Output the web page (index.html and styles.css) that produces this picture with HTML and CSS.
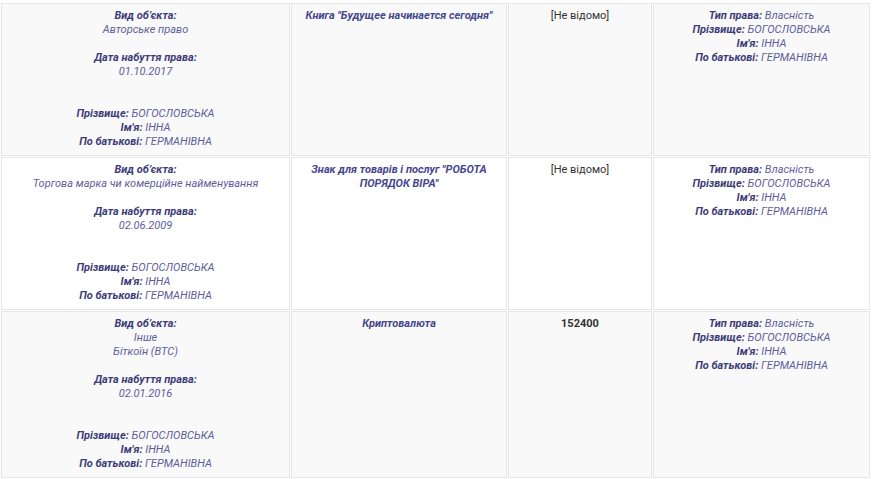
FILE: index.html
```html
<!DOCTYPE html>
<html lang="uk">
<head>
    <meta charset="UTF-8">
    <meta name="viewport" content="width=device-width, initial-scale=1.0">
    <title>Об'єкти інтелектуальної власності</title>
    <link rel="stylesheet" href="styles.css">
</head>
<body>
    <table class="rights-table">
        <colgroup>
            <col class="col-object">
            <col class="col-name">
            <col class="col-cost">
            <col class="col-owner">
        </colgroup>
        <tbody>
            <!-- Авторське право -->
            <tr>
                <td>
                    <div class="field">
                        <span class="label">Вид об’єкта:</span>
                        <div class="value">Авторське право</div>
                    </div>
                    <div class="field">
                        <span class="label">Дата набуття права:</span>
                        <div class="value">01.10.2017</div>
                    </div>
                    <div class="person">
                        <div><span class="label">Прізвище:</span> <span class="value">БОГОСЛОВСЬКА</span></div>
                        <div><span class="label">Ім'я:</span> <span class="value">ІННА</span></div>
                        <div><span class="label">По батькові:</span> <span class="value">ГЕРМАНІВНА</span></div>
                    </div>
                </td>
                <td class="title">Книга "Будущее начинается сегодня"</td>
                <td class="cost">[Не відомо]</td>
                <td>
                    <div><span class="label">Тип права:</span> <span class="value">Власність</span></div>
                    <div><span class="label">Прізвище:</span> <span class="value">БОГОСЛОВСЬКА</span></div>
                    <div><span class="label">Ім'я:</span> <span class="value">ІННА</span></div>
                    <div><span class="label">По батькові:</span> <span class="value">ГЕРМАНІВНА</span></div>
                </td>
            </tr>

            <!-- Торгова марка -->
            <tr>
                <td>
                    <div class="field">
                        <span class="label">Вид об’єкта:</span>
                        <div class="value">Торгова марка чи комерційне найменування</div>
                    </div>
                    <div class="field">
                        <span class="label">Дата набуття права:</span>
                        <div class="value">02.06.2009</div>
                    </div>
                    <div class="person">
                        <div><span class="label">Прізвище:</span> <span class="value">БОГОСЛОВСЬКА</span></div>
                        <div><span class="label">Ім'я:</span> <span class="value">ІННА</span></div>
                        <div><span class="label">По батькові:</span> <span class="value">ГЕРМАНІВНА</span></div>
                    </div>
                </td>
                <td class="title">Знак для товарів і послуг "РОБОТА ПОРЯДОК ВІРА"</td>
                <td class="cost">[Не відомо]</td>
                <td>
                    <div><span class="label">Тип права:</span> <span class="value">Власність</span></div>
                    <div><span class="label">Прізвище:</span> <span class="value">БОГОСЛОВСЬКА</span></div>
                    <div><span class="label">Ім'я:</span> <span class="value">ІННА</span></div>
                    <div><span class="label">По батькові:</span> <span class="value">ГЕРМАНІВНА</span></div>
                </td>
            </tr>

            <!-- Криптовалюта -->
            <tr>
                <td>
                    <div class="field">
                        <span class="label">Вид об’єкта:</span>
                        <div class="value">Інше</div>
                        <div class="value">Біткоїн (BTC)</div>
                    </div>
                    <div class="field">
                        <span class="label">Дата набуття права:</span>
                        <div class="value">02.01.2016</div>
                    </div>
                    <div class="person">
                        <div><span class="label">Прізвище:</span> <span class="value">БОГОСЛОВСЬКА</span></div>
                        <div><span class="label">Ім'я:</span> <span class="value">ІННА</span></div>
                        <div><span class="label">По батькові:</span> <span class="value">ГЕРМАНІВНА</span></div>
                    </div>
                </td>
                <td class="title">Криптовалюта</td>
                <td class="cost amount">152400</td>
                <td>
                    <div><span class="label">Тип права:</span> <span class="value">Власність</span></div>
                    <div><span class="label">Прізвище:</span> <span class="value">БОГОСЛОВСЬКА</span></div>
                    <div><span class="label">Ім'я:</span> <span class="value">ІННА</span></div>
                    <div><span class="label">По батькові:</span> <span class="value">ГЕРМАНІВНА</span></div>
                </td>
            </tr>
        </tbody>
    </table>
</body>
</html>
```

FILE: styles.css
```css
:root {
    --border-color: #e6e6e6;
    --row-alt: #f9f9f9;
    --label-color: #3d3d7a;
    --value-color: #5d5d9c;
    --title-color: #46468f;
    --text-color: #333;
}

body {
    margin: 0;
    padding-top: 2px;
    background-color: #fff;
    font-family: Roboto, "Liberation Sans", Arial, sans-serif;
    font-size: 11px;
    line-height: 14px;
    color: var(--text-color);
}

.rights-table {
    width: 871px;
    table-layout: fixed;
    border-collapse: separate;
    border-spacing: 1px;
}

.col-object { width: 289px; }
.col-name { width: 216px; }
.col-cost { width: 144px; }
.col-owner { width: 217px; }

.rights-table td {
    border: 1px solid var(--border-color);
    padding: 5px 6px 6px;
    vertical-align: top;
    text-align: center;
}

.rights-table tr:nth-child(odd) td {
    background-color: var(--row-alt);
}

.label {
    font-weight: bold;
    font-style: italic;
    color: var(--label-color);
}

.value {
    font-style: italic;
    color: var(--value-color);
}

.field {
    margin-bottom: 14px;
}

.person {
    margin-top: 28px;
}

.title {
    font-weight: bold;
    font-style: italic;
    color: var(--title-color);
}

.cost {
    color: var(--text-color);
}

.amount {
    font-weight: bold;
}
```
